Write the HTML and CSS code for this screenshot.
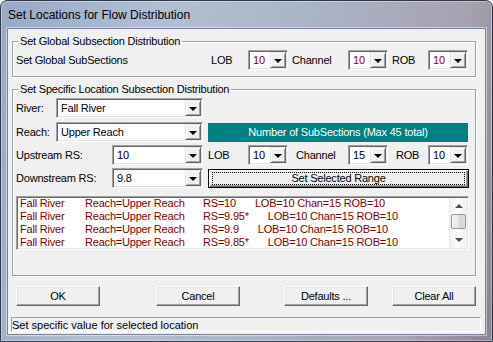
FILE: index.html
```html
<html>

<head>
    <meta name="viewport" content="width=device-width, initial-scale=1.0">
    <link rel="stylesheet" href="styles.css">
</head>

<body>
    <div class="window">
        <div class="titlebar">Set Locations for Flow Distribution</div>
        <div class="client">
            <fieldset class="group">
                <legend>Set Global Subsection Distribution</legend>
                <div class="row first">
                    <span class="lbl glob">Set Global SubSections</span>
                    <span class="lbl w40">LOB</span>
                    <div class="combo w40 red"><span class="val">10</span><span class="drop"></span></div>
                    <span class="lbl w60 pl4">Channel</span>
                    <div class="combo w40 red"><span class="val">10</span><span class="drop"></span></div>
                    <span class="lbl w40 pl4">ROB</span>
                    <div class="combo w40 red"><span class="val">10</span><span class="drop"></span></div>
                </div>
            </fieldset>

            <fieldset class="group specific">
                <legend>Set Specific Location Subsection Distribution</legend>
                <div class="row first">
                    <span class="lbl short">River:</span>
                    <div class="combo w147"><span class="val">Fall River</span><span class="drop"></span></div>
                </div>
                <div class="row gap4">
                    <span class="lbl short">Reach:</span>
                    <div class="combo w147"><span class="val">Upper Reach</span><span class="drop"></span></div>
                    <div class="banner">Number of SubSections (Max 45 total)</div>
                </div>
                <div class="row gap3">
                    <span class="lbl long">Upstream RS:</span>
                    <div class="combo w91"><span class="val">10</span><span class="drop"></span></div>
                    <span class="lbl w45 pl5">LOB</span>
                    <div class="combo w40"><span class="val">10</span><span class="drop"></span></div>
                    <span class="lbl w60 pl8">Channel</span>
                    <div class="combo w40"><span class="val">15</span><span class="drop"></span></div>
                    <span class="lbl w40 pl8">ROB</span>
                    <div class="combo w40"><span class="val">10</span><span class="drop"></span></div>
                </div>
                <div class="row gap3">
                    <span class="lbl long">Downstream RS:</span>
                    <div class="combo w91"><span class="val">9.8</span><span class="drop"></span></div>
                    <div class="btn default range"><span class="focus">Set Selected Range</span></div>
                </div>

                <div class="listbox">
                    <div class="items">
                        <div class="item"><span class="c1">Fall River</span><span class="c2">Reach=Upper Reach</span><span class="c3">RS=10</span><span class="c4">LOB=10 Chan=15 ROB=10</span></div>
                        <div class="item"><span class="c1">Fall River</span><span class="c2">Reach=Upper Reach</span><span class="c3">RS=9.95*</span><span class="c4">LOB=10 Chan=15 ROB=10</span></div>
                        <div class="item"><span class="c1">Fall River</span><span class="c2">Reach=Upper Reach</span><span class="c3">RS=9.9</span><span class="c4">LOB=10 Chan=15 ROB=10</span></div>
                        <div class="item"><span class="c1">Fall River</span><span class="c2">Reach=Upper Reach</span><span class="c3">RS=9.85*</span><span class="c4">LOB=10 Chan=15 ROB=10</span></div>
                    </div>
                    <div class="scrollbar">
                        <span class="arrow up"></span>
                        <span class="thumb"></span>
                        <span class="arrow down"></span>
                    </div>
                </div>
            </fieldset>

            <div class="buttons">
                <div class="btn ok">OK</div>
                <div class="btn cancel">Cancel</div>
                <div class="btn defaults">Defaults ...</div>
                <div class="btn clear">Clear All</div>
            </div>

            <div class="status">Set specific value for selected location</div>
        </div>
    </div>
</body>

</html>
```

FILE: styles.css
```css
body {
    margin: 0px;
    background-color: white;
    font-family: "Liberation Sans", Arial, sans-serif;
    font-size: 11px;
    letter-spacing: -0.2px;
    color: #000;
}

.window {
    width: 493px;
    height: 342px;
    box-sizing: border-box;
    display: flex;
    flex-direction: column;
    border: 1px solid #2f3a4c;
    border-radius: 7px 7px 0 0;
    padding: 0 6px 6px 6px;
    background: linear-gradient(100deg, #97a9c6 0%, #b3bfd3 30%, #aab5c9 55%, #a8a2b0 85%, #8c8290 100%);
    box-shadow: inset 0 0 0 1px rgba(255, 255, 255, 0.35);
}

.titlebar {
    height: 27px;
    line-height: 29px;
    padding-left: 1px;
    font-size: 12px;
    letter-spacing: 0;
    white-space: nowrap;
}

.client {
    flex: 1;
    background-color: #f0f0f0;
    border: 1px solid #76839a;
    box-shadow: 0 0 0 1px rgba(255, 255, 255, 0.45);
}

/* group boxes */
.group {
    box-sizing: border-box;
    width: 464px;
    margin: 6px 0 0 4px;
    padding: 0 0 6px 0;
    min-inline-size: 0;
    border: 1px solid #a0a0a0;
    box-shadow: inset 1px 1px #fff, 1px 1px #fff;
}

.group legend {
    margin-left: 5px;
    padding: 0 2px;
    line-height: 13px;
    background-color: #f0f0f0;
}

.specific {
    padding-bottom: 25px;
}

.row {
    display: flex;
    align-items: center;
    height: 20px;
}

.row.first {
    margin-top: 2px;
}

.row.gap4 {
    margin-top: 4px;
}

.row.gap3 {
    margin-top: 3px;
}

.lbl {
    box-sizing: border-box;
    white-space: nowrap;
    padding-left: 3px;
}

.glob {
    width: 195px;
}

.short {
    width: 43px;
}

.long {
    width: 99px;
}

.w40 {
    width: 40px;
}

.w45 {
    width: 45px;
}

.w60 {
    width: 60px;
}

.w91 {
    width: 91px;
}

.w147 {
    width: 147px;
}

.pl4 {
    padding-left: 4px;
}

.pl5 {
    padding-left: 5px;
}

.pl8 {
    padding-left: 8px;
}

/* combo boxes */
.combo {
    box-sizing: border-box;
    height: 20px;
    display: flex;
    align-items: stretch;
    background-color: white;
    border: 1px solid;
    border-color: #a0a0a0 #fff #fff #a0a0a0;
    box-shadow: inset 1px 1px #696969, inset -1px -1px #e3e3e3;
    padding: 1px;
}

.combo .val {
    flex: 1;
    padding-left: 3px;
    line-height: 16px;
    white-space: nowrap;
    overflow: hidden;
}

.combo.red .val {
    color: #800000;
}

.combo .drop {
    width: 16px;
    box-sizing: border-box;
    background-color: #f0f0f0;
    border: 1px solid;
    border-color: #e3e3e3 #696969 #696969 #e3e3e3;
    box-shadow: inset 1px 1px #fff, inset -1px -1px #a0a0a0;
    display: flex;
    align-items: center;
    justify-content: center;
}

.combo .drop::after {
    content: "";
    border-left: 4px solid transparent;
    border-right: 4px solid transparent;
    border-top: 4px solid #000;
    margin-top: 1px;
}

.banner {
    margin-left: 5px;
    width: 260px;
    height: 19px;
    line-height: 19px;
    background-color: #008080;
    color: white;
    text-align: center;
    white-space: nowrap;
}

/* buttons */
.btn {
    box-sizing: border-box;
    width: 84px;
    height: 20px;
    display: flex;
    align-items: center;
    justify-content: center;
    background-color: #f0f0f0;
    border: 1px solid;
    border-color: #fff #696969 #696969 #fff;
    box-shadow: inset -1px -1px #a0a0a0, inset 1px 1px #e3e3e3;
    white-space: nowrap;
}

.btn.default {
    border-color: #000;
    box-shadow: inset 1px 1px #fff, inset -1px -1px #696969, inset -2px -2px #a0a0a0;
    align-items: stretch;
}

.range {
    margin-left: 5px;
    width: 261px;
    height: 19px;
}

.focus {
    flex: 1;
    margin: 2px 3px 2px 3px;
    border: 1px dotted #000;
    display: flex;
    align-items: center;
    justify-content: center;
}

.buttons {
    display: flex;
    margin-top: 10px;
}

.ok {
    margin-left: 8px;
}

.cancel {
    margin-left: 56px;
}

.defaults {
    margin-left: 44px;
}

.clear {
    margin-left: 24px;
}

/* list */
.listbox {
    box-sizing: border-box;
    width: 453px;
    height: 54px;
    margin: 8px 0 0 3px;
    display: flex;
    background-color: white;
    border: 1px solid;
    border-color: #a0a0a0 #fff #fff #a0a0a0;
    box-shadow: inset 1px 1px #696969, inset -1px -1px #e3e3e3;
    padding: 0 1px 1px 1px;
}

.items {
    flex: 1;
    overflow: hidden;
    padding-left: 2px;
    color: #800000;
}

.item {
    line-height: 13px;
    height: 13px;
    white-space: nowrap;
}

.item span {
    display: inline-block;
}

.c1 {
    width: 65px;
}

.c2 {
    width: 118px;
}

.c4 {
    margin-left: 19px;
}

.scrollbar {
    width: 17px;
    margin-top: 1px;
    display: flex;
    flex-direction: column;
    align-items: center;
    background: linear-gradient(90deg, #f0f0f0, #fbfbfb 40%, #f0f0f0);
    border-left: 1px solid #eaeaea;
}

.arrow {
    height: 16px;
    width: 100%;
    display: flex;
    align-items: center;
    justify-content: center;
}

.arrow.up::after {
    content: "";
    border-left: 4px solid transparent;
    border-right: 4px solid transparent;
    border-bottom: 4px solid #4d4d4d;
}

.arrow.down {
    margin-top: auto;
}

.arrow.down::after {
    content: "";
    border-left: 4px solid transparent;
    border-right: 4px solid transparent;
    border-top: 4px solid #4d4d4d;
}

.thumb {
    box-sizing: border-box;
    width: 15px;
    height: 15px;
    border: 1px solid #979797;
    border-radius: 2px;
    background: linear-gradient(90deg, #f4f4f4, #e6e6e6 50%, #d4d4d4 51%, #dcdcdc);
}

/* status line */
.status {
    height: 15px;
    margin: 11px 4px 0 3px;
    line-height: 14px;
    border: 1px solid;
    border-color: #a0a0a0 #fff #fff #a0a0a0;
    box-sizing: border-box;
    white-space: nowrap;
    letter-spacing: 0;
}
```
